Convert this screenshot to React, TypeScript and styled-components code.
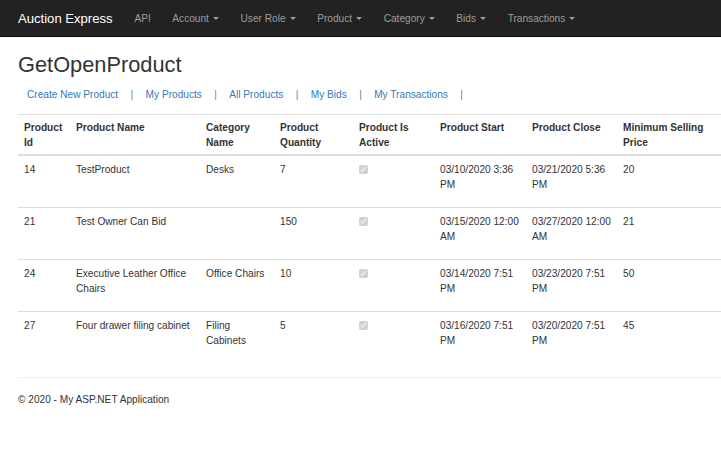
import React from "react";
import styled, { createGlobalStyle } from "styled-components";

const Global = createGlobalStyle`
  html, body { margin: 0; padding: 0; background: #fff; overflow: hidden; }
  body {
    font-family: "Liberation Sans", Arial, Helvetica, sans-serif;
    font-size: 10.15px;
    line-height: 15px;
    color: #333;
  }
  * { box-sizing: border-box; }
`;

const Navbar = styled.nav`
  height: 37px;
  background: #222;
  border-bottom: 1px solid #080808;
  display: flex;
  align-items: center;
  padding-left: 18px;
`;

const Brand = styled.a`
  font-size: 13.1px;
  color: #fff;
  text-decoration: none;
  margin-right: 11px;
`;

const NavItem = styled.a`
  color: #9d9d9d;
  font-size: 10.15px;
  padding: 0 10.8px;
  text-decoration: none;
  display: flex;
  align-items: center;
`;

const Caret = styled.span`
  display: inline-block;
  width: 0;
  height: 0;
  margin-left: 4px;
  border-top: 3px solid #9d9d9d;
  border-left: 3px solid transparent;
  border-right: 3px solid transparent;
`;

const Container = styled.main`
  padding-left: 18px;
`;

const Title = styled.h2`
  font-size: 21.8px;
  font-weight: 500;
  line-height: 25px;
  margin: 15px 0 10px;
  color: #333;
`;

const LinkRow = styled.p`
  margin: 0 0 12px;
  padding-left: 9px;
  display: flex;
  gap: 12.4px;
  line-height: 15px;
`;

const Link = styled.a`
  color: #337ab7;
  text-decoration: none;
`;

const Sep = styled.span`
  color: #5a7fa6;
`;

const Table = styled.table`
  width: 100%;
  border-collapse: collapse;
  margin-bottom: 14px;
  table-layout: fixed;
`;

const Th = styled.th<{ $w?: number }>`
  width: ${(p) => (p.$w ? `${p.$w}px` : "auto")};
  text-align: left;
  vertical-align: top;
  font-weight: bold;
  padding: 5px 6px 4px;
  line-height: 15px;
  border-top: 1px solid #ddd;
  border-bottom: 2px solid #ddd;
`;

const Td = styled.td`
  vertical-align: top;
  padding: 6px 6px 6px;
  height: 52px;
  line-height: 15px;
  border-top: 1px solid #ddd;
`;

const Check = styled.input`
  width: 9px;
  height: 9px;
  margin: 3px 0 0 0;
`;

const Hr = styled.hr`
  border: 0;
  border-top: 1px solid #eee;
  margin: 0 0 14px;
`;

const Footer = styled.footer`
  line-height: 15px;
`;

type Row = {
  id: string;
  name: string;
  cat: string;
  qty: string;
  start: string;
  close: string;
  min: string;
};

const rows: Row[] = [
  { id: "14", name: "TestProduct", cat: "Desks", qty: "7", start: "03/10/2020 3:36 PM", close: "03/21/2020 5:36 PM", min: "20" },
  { id: "21", name: "Test Owner Can Bid", cat: "", qty: "150", start: "03/15/2020 12:00 AM", close: "03/27/2020 12:00 AM", min: "21" },
  { id: "24", name: "Executive Leather Office Chairs", cat: "Office Chairs", qty: "10", start: "03/14/2020 7:51 PM", close: "03/23/2020 7:51 PM", min: "50" },
  { id: "27", name: "Four drawer filing cabinet", cat: "Filing Cabinets", qty: "5", start: "03/16/2020 7:51 PM", close: "03/20/2020 7:51 PM", min: "45" },
];

const navItems: [string, boolean][] = [
  ["API", false],
  ["Account", true],
  ["User Role", true],
  ["Product", true],
  ["Category", true],
  ["Bids", true],
  ["Transactions", true],
];

const links = ["Create New Product", "My Products", "All Products", "My Bids", "My Transactions"];

export default function App() {
  return (
    <>
      <Global />
      <Navbar>
        <Brand href="#">Auction Express</Brand>
        {navItems.map(([label, caret]) => (
          <NavItem key={label} href="#">
            {label}
            {caret && <Caret />}
          </NavItem>
        ))}
      </Navbar>
      <Container>
        <Title>GetOpenProduct</Title>
        <LinkRow>
          {links.map((l) => (
            <React.Fragment key={l}>
              <Link href="#">{l}</Link>
              <Sep>|</Sep>
            </React.Fragment>
          ))}
        </LinkRow>
        <Table>
          <thead>
            <tr>
              <Th $w={52}>Product Id</Th>
              <Th $w={130}>Product Name</Th>
              <Th $w={74}>Category Name</Th>
              <Th $w={79}>Product Quantity</Th>
              <Th $w={81}>Product Is Active</Th>
              <Th $w={92}>Product Start</Th>
              <Th $w={91}>Product Close</Th>
              <Th>Minimum Selling Price</Th>
            </tr>
          </thead>
          <tbody>
            {rows.map((r) => (
              <tr key={r.id}>
                <Td>{r.id}</Td>
                <Td>{r.name}</Td>
                <Td>{r.cat}</Td>
                <Td>{r.qty}</Td>
                <Td>
                  <Check type="checkbox" checked disabled readOnly />
                </Td>
                <Td>{r.start}</Td>
                <Td>{r.close}</Td>
                <Td>{r.min}</Td>
              </tr>
            ))}
          </tbody>
        </Table>
        <Hr />
        <Footer>© 2020 - My ASP.NET Application</Footer>
      </Container>
    </>
  );
}
